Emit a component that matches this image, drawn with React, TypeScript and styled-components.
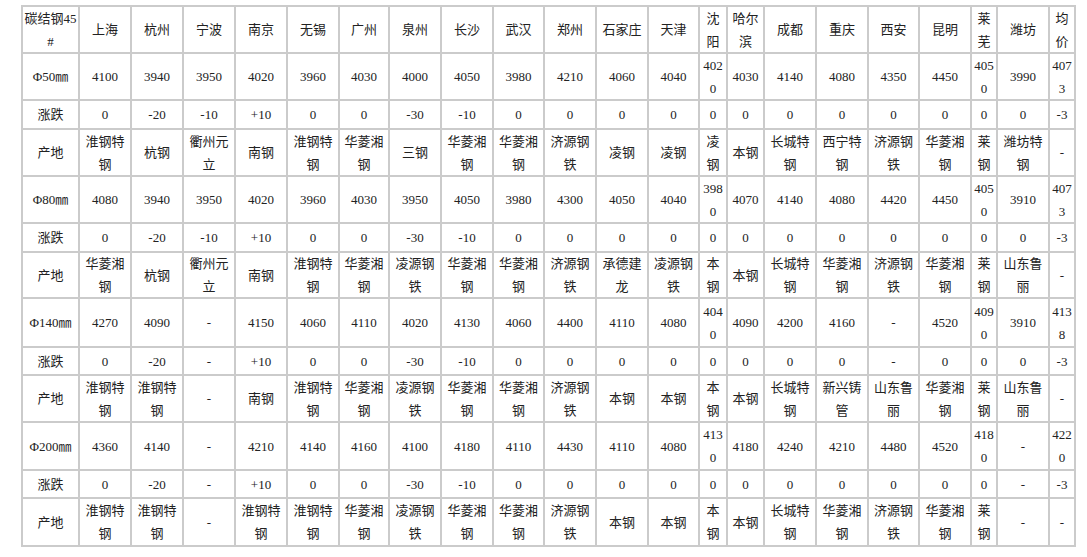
import React from "react";
import styled, { createGlobalStyle } from "styled-components";

const GlobalStyle = createGlobalStyle`
  html, body {
    margin: 0;
    padding: 0;
    background: #fff;
  }
`;

// widths of cells (between the 2px grid lines)
const colWidths = [55, 50, 50, 50, 50, 50, 48, 50, 50, 49, 50, 50, 49, 26, 35, 50, 50, 49, 50, 24, 50, 24];
const rowHeights = [45, 45, 27, 45, 45, 27, 44, 47, 26, 45, 46, 26, 46];

const cities = [
  "上海", "杭州", "宁波", "南京", "无锡", "广州", "泉州", "长沙", "武汉", "郑州", "石家庄",
  "天津", "沈阳", "哈尔滨", "成都", "重庆", "西安", "昆明", "莱芜", "潍坊", "均价",
];

const rows: string[][] = [
  ["碳结钢45#", ...cities],
  ["Φ50㎜", "4100", "3940", "3950", "4020", "3960", "4030", "4000", "4050", "3980", "4210", "4060", "4040", "4020", "4030", "4140", "4080", "4350", "4450", "4050", "3990", "4073"],
  ["涨跌", "0", "-20", "-10", "+10", "0", "0", "-30", "-10", "0", "0", "0", "0", "0", "0", "0", "0", "0", "0", "0", "0", "-3"],
  ["产地", "淮钢特钢", "杭钢", "衢州元立", "南钢", "淮钢特钢", "华菱湘钢", "三钢", "华菱湘钢", "华菱湘钢", "济源钢铁", "凌钢", "凌钢", "凌钢", "本钢", "长城特钢", "西宁特钢", "济源钢铁", "华菱湘钢", "莱钢", "潍坊特钢", "-"],
  ["Φ80㎜", "4080", "3940", "3950", "4020", "3960", "4030", "3950", "4050", "3980", "4300", "4050", "4040", "3980", "4070", "4140", "4080", "4420", "4450", "4050", "3910", "4073"],
  ["涨跌", "0", "-20", "-10", "+10", "0", "0", "-30", "-10", "0", "0", "0", "0", "0", "0", "0", "0", "0", "0", "0", "0", "-3"],
  ["产地", "华菱湘钢", "杭钢", "衢州元立", "南钢", "淮钢特钢", "华菱湘钢", "凌源钢铁", "华菱湘钢", "华菱湘钢", "济源钢铁", "承德建龙", "凌源钢铁", "本钢", "本钢", "长城特钢", "华菱湘钢", "济源钢铁", "华菱湘钢", "莱钢", "山东鲁丽", "-"],
  ["Φ140㎜", "4270", "4090", "-", "4150", "4060", "4110", "4020", "4130", "4060", "4400", "4110", "4080", "4040", "4090", "4200", "4160", "-", "4520", "4090", "3910", "4138"],
  ["涨跌", "0", "-20", "-", "+10", "0", "0", "-30", "-10", "0", "0", "0", "0", "0", "0", "0", "0", "-", "0", "0", "0", "-3"],
  ["产地", "淮钢特钢", "淮钢特钢", "-", "南钢", "淮钢特钢", "华菱湘钢", "凌源钢铁", "华菱湘钢", "华菱湘钢", "济源钢铁", "本钢", "本钢", "本钢", "本钢", "长城特钢", "新兴铸管", "山东鲁丽", "华菱湘钢", "莱钢", "山东鲁丽", "-"],
  ["Φ200㎜", "4360", "4140", "-", "4210", "4140", "4160", "4100", "4180", "4110", "4430", "4110", "4080", "4130", "4180", "4240", "4210", "4480", "4520", "4180", "-", "4220"],
  ["涨跌", "0", "-20", "-", "+10", "0", "0", "-30", "-10", "0", "0", "0", "0", "0", "0", "0", "0", "0", "0", "0", "-", "-3"],
  ["产地", "淮钢特钢", "淮钢特钢", "-", "淮钢特钢", "淮钢特钢", "华菱湘钢", "凌源钢铁", "华菱湘钢", "华菱湘钢", "济源钢铁", "本钢", "本钢", "本钢", "本钢", "长城特钢", "华菱湘钢", "济源钢铁", "华菱湘钢", "莱钢", "-", "-"],
];

const App = () => {
  return (
    <>
      <GlobalStyle />
      <Page>
        <PriceTable $cols={colWidths} $rows={rowHeights}>
          {rows.map((row, r) =>
            row.map((text, c) => <Cell key={`${r}-${c}`}>{text}</Cell>)
          )}
        </PriceTable>
      </Page>
    </>
  );
};

export default App;

const Page = styled.div`
  padding: 5px 0 0 21px;
  font-family: "Liberation Serif", "Noto Sans CJK SC", serif;
  font-size: 13px;
  color: #222;
`;

const PriceTable = styled.div<{ $cols: number[]; $rows: number[] }>`
  display: inline-grid;
  grid-template-columns: ${({ $cols }) => $cols.map((w) => `${w}px`).join(" ")};
  grid-template-rows: ${({ $rows }) => $rows.map((h) => `${h}px`).join(" ")};
  gap: 2px;
  padding: 2px;
  background: #cbcbcb;
`;

const Cell = styled.div`
  background: #fff;
  display: flex;
  align-items: center;
  justify-content: center;
  text-align: center;
  padding: 0 1px;
  line-height: 23px;
  word-break: break-all;
  overflow: hidden;
`;
